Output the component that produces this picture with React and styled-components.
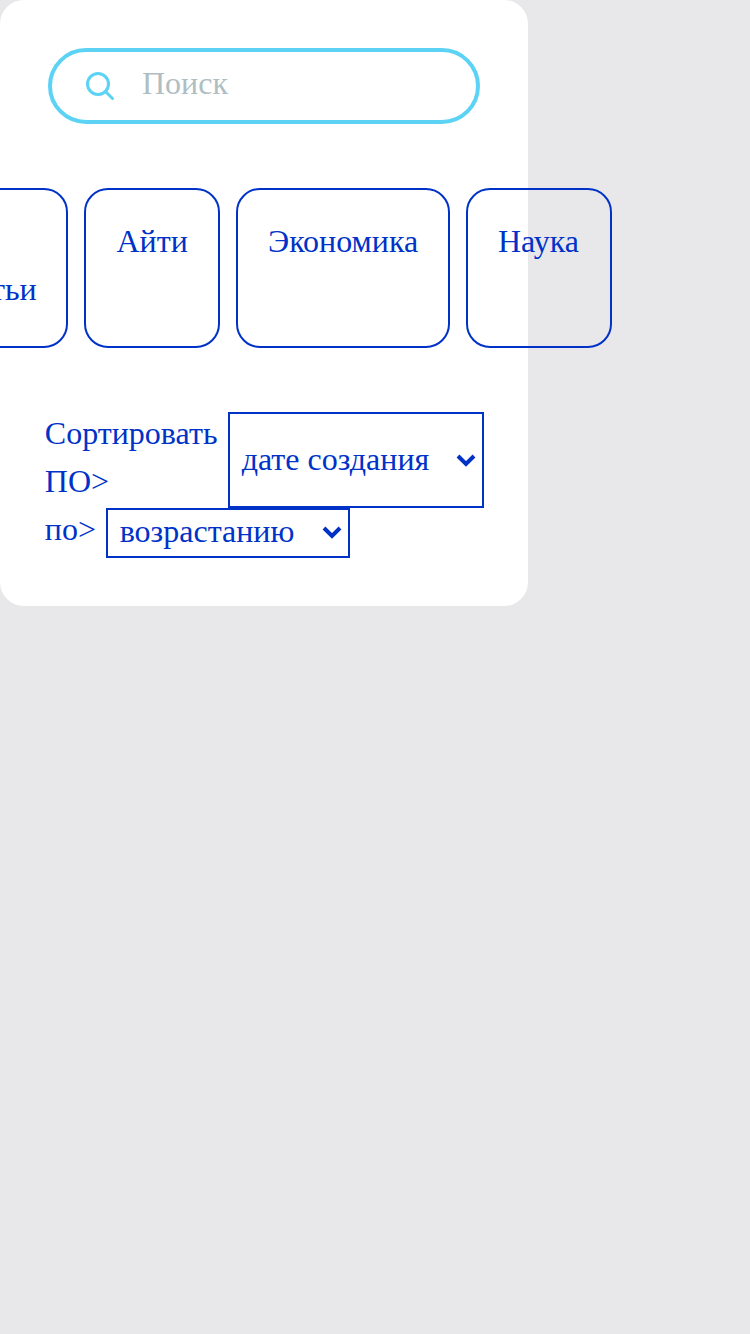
import React from 'react';
import styled, { createGlobalStyle } from 'styled-components';

const BLUE = '#0032c8';
const SKY = '#5cd3f5';

const GlobalStyle = createGlobalStyle`
  *, *::before, *::after { box-sizing: border-box; }
  html { background: #e8e8ea; }
  body {
    margin: 0;
    overflow: hidden;
    font-family: "Liberation Serif", "Times New Roman", serif;
    font-size: 32px;
    line-height: 48px;
    color: ${BLUE};
  }
`;

const Panel = styled.main`
  display: flex;
  flex-direction: column;
  gap: 64px;
  width: 528px;
  padding: 48px;
  border-radius: 24px;
  background: #fff;
`;

const SearchBox = styled.label`
  display: flex;
  align-items: center;
  height: 76px;
  padding: 0 32px;
  border: 4px solid ${SKY};
  border-radius: 38px;
`;

const SearchIcon = styled.svg`
  flex: none;
  width: 32px;
  height: 32px;
  margin-right: 26px;
  fill: none;
  stroke: ${SKY};
  stroke-width: 3;
  stroke-linecap: round;
`;

const SearchInput = styled.input`
  flex: 1;
  min-width: 0;
  height: 48px;
  margin-top: -6px;
  padding: 0;
  border: 0;
  outline: 0;
  background: transparent;
  font: inherit;
  color: ${BLUE};
  &::placeholder { color: #afbec3; opacity: 1; }
`;

const Tabs = styled.nav`
  display: flex;
  justify-content: center;
  gap: 16px;
`;

const Tab = styled.a`
  flex: none;
  width: ${(p) => p.$width}px;
  height: 160px;
  padding: 27px 0 0 ${(p) => p.$inset}px;
  border: 2px solid ${BLUE};
  border-radius: 24px;
  cursor: pointer;
`;

const Sorting = styled.section`
  display: flex;
  flex-direction: column;
  margin: 0 -4px;
`;

const SortRow = styled.div`
  display: flex;
  align-items: stretch;
  height: ${(p) => p.$height}px;
`;

const SortLabel = styled.span`
  width: ${(p) => p.$width}px;
  flex: none;
  margin-top: -3px;
  padding-left: 0.8px;
`;

const Select = styled.button`
  display: flex;
  align-items: flex-start;
  justify-content: space-between;
  width: ${(p) => p.$width}px;
  padding: ${(p) => p.$top}px 6px 0 11.7px;
  border: 2px solid ${BLUE};
  background: transparent;
  font: inherit;
  line-height: 42px;
  color: inherit;
  text-align: left;
  white-space: nowrap;
`;

const Chevron = styled.svg`
  flex: none;
  width: 20px;
  height: 14px;
  margin-top: 15px;
  fill: none;
  stroke: ${BLUE};
  stroke-width: 4;
`;

function Dropdown({ width, top = 0, children }) {
  return (
    <Select type="button" $width={width} $top={top}>
      <span>{children}</span>
      <Chevron viewBox="0 0 20 14">
        <path d="M2 3l8 8 8-8" />
      </Chevron>
    </Select>
  );
}

export default function App() {
  return (
    <>
      <GlobalStyle />
      <Panel>
        <SearchBox>
          <SearchIcon viewBox="0 0 32 32">
            <circle cx="14" cy="14" r="10.5" />
            <path d="M22 22l6.5 6.5" />
          </SearchIcon>
          <SearchInput placeholder="Поиск" />
        </SearchBox>
        <Tabs>
          <Tab $width={152} $inset={31}>Все статьи</Tab>
          <Tab $width={136} $inset={30.5}>Айти</Tab>
          <Tab $width={214} $inset={30}>Экономика</Tab>
          <Tab $width={146} $inset={30}>Наука</Tab>
        </Tabs>
        <Sorting>
          <SortRow $height={96}>
            <SortLabel $width={184}>Сортировать ПО&gt;</SortLabel>
            <Dropdown width={256} top={24}>дате создания</Dropdown>
          </SortRow>
          <SortRow $height={50}>
            <SortLabel $width={62}>по&gt;</SortLabel>
            <Dropdown width={244}>возрастанию</Dropdown>
          </SortRow>
        </Sorting>
      </Panel>
    </>
  );
}
